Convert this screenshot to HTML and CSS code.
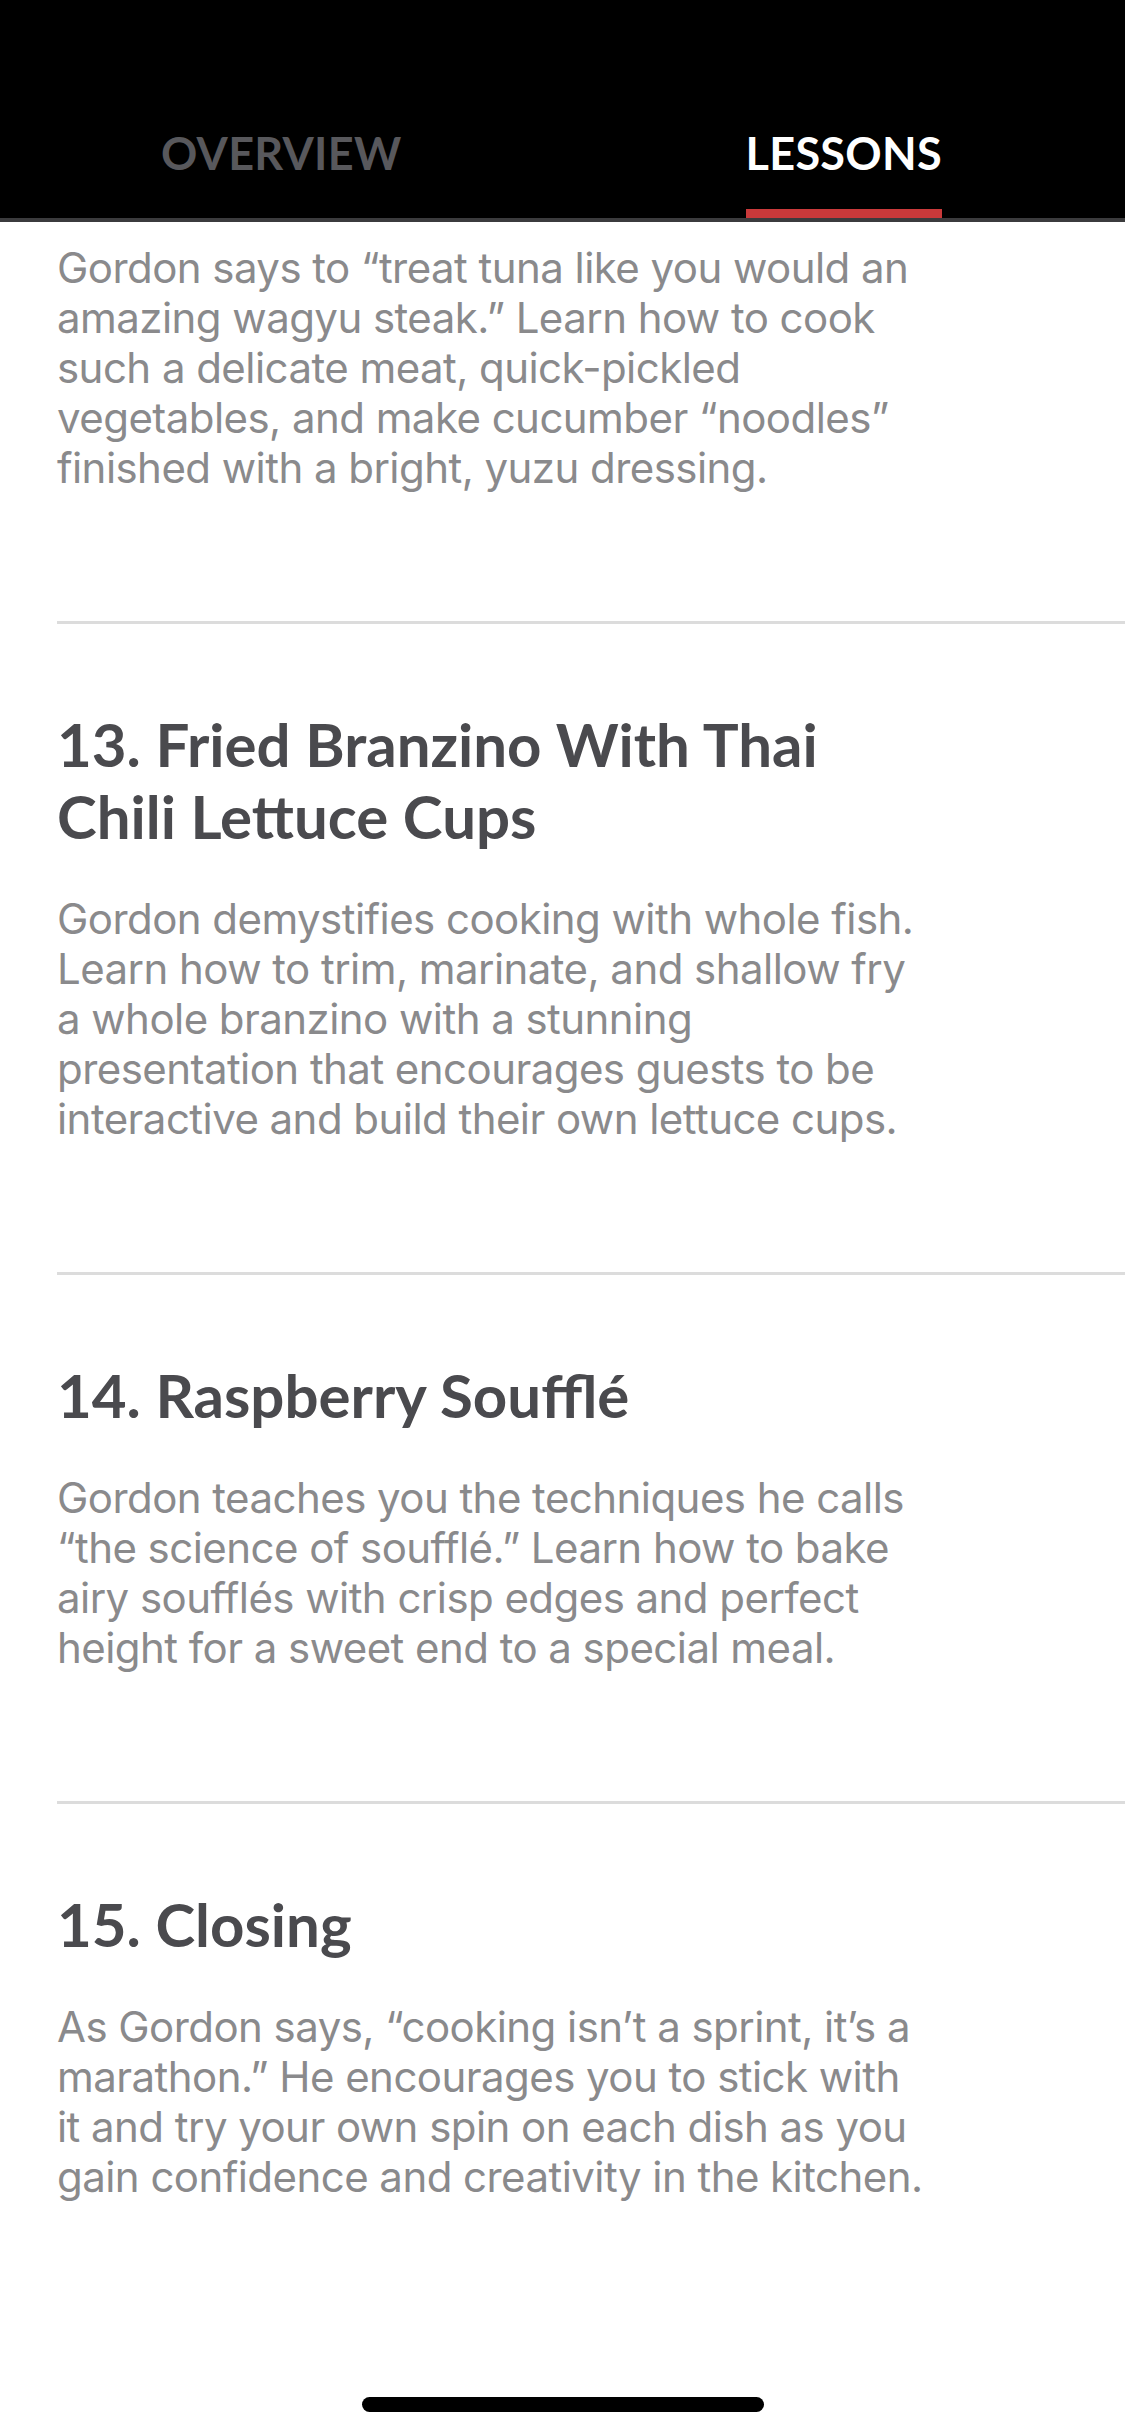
FILE: index.html
```html
<!DOCTYPE html>
<html lang="en">
<head>
<meta charset="utf-8">
<title>Lessons</title>
<link rel="stylesheet" href="styles.css">
</head>
<body>
<div class="screen">
  <header class="header">
    <nav class="tabs">
      <div class="tab">
        <div class="tab-inner">
          <span class="tab-label">OVERVIEW</span>
        </div>
      </div>
      <div class="tab tab-active">
        <div class="tab-inner">
          <span class="tab-label">LESSONS</span>
          <span class="tab-bar"></span>
        </div>
      </div>
    </nav>
  </header>

  <main class="list">
    <section class="lesson lesson-partial">
      <p class="lesson-text">Gordon says to “treat tuna like you would an amazing wagyu steak.” Learn how to cook such a delicate meat, quick-pickled vegetables, and make cucumber “noodles” finished with a bright, yuzu dressing.</p>
    </section>
    <section class="lesson">
      <h2 class="lesson-title">13. Fried Branzino With Thai Chili Lettuce Cups</h2>
      <p class="lesson-text">Gordon demystifies cooking with whole fish. Learn how to trim, marinate, and shallow fry a whole branzino with a stunning presentation that encourages guests to be interactive and build their own lettuce cups.</p>
    </section>
    <section class="lesson">
      <h2 class="lesson-title">14. Raspberry Soufflé</h2>
      <p class="lesson-text">Gordon teaches you the techniques he calls “the science of soufflé.” Learn how to bake airy soufflés with crisp edges and perfect height for a sweet end to a special meal.</p>
    </section>
    <section class="lesson lesson-last">
      <h2 class="lesson-title">15. Closing</h2>
      <p class="lesson-text">As Gordon says, “cooking isn’t a sprint, it’s a marathon.” He encourages you to stick with it and try your own spin on each dish as you gain confidence and creativity in the kitchen.</p>
    </section>
  </main>

  <div class="home-indicator"></div>
</div>
</body>
</html>
```

FILE: styles.css
```css
* { box-sizing: border-box; }

html, body {
  margin: 0;
  padding: 0;
  background: #ffffff;
}

.screen {
  position: relative;
  width: 1125px;
  height: 2436px;
  overflow: hidden;
  background: #ffffff;
}

.header {
  background: #000000;
  padding-top: 126px;
  border-bottom: 4px solid #3b3b3d;
}

.tabs {
  display: grid;
  grid-template-columns: 1fr 1fr;
}

.tab {
  display: flex;
  justify-content: center;
}

.tab-inner {
  display: inline-flex;
  flex-direction: column;
  align-items: stretch;
  padding-bottom: 38px;
}

.tab-active .tab-inner {
  padding-bottom: 0;
}

.tab-label {
  font-family: Lato, "Liberation Sans", sans-serif;
  font-weight: 700;
  font-size: 45px;
  line-height: 54px;
  letter-spacing: 0.3px;
  color: #58585c;
  text-align: center;
}

.tab-active .tab-label {
  color: #ffffff;
}

.tab-bar {
  display: block;
  height: 9px;
  margin-top: 29px;
  margin-bottom: -4px;
  background: #c9393a;
  position: relative;
}

.list {
  padding-top: 21px;
}

.lesson {
  margin-left: 57px;
  padding: 84px 193px 128px 0;
  border-bottom: 3px solid #dcdcdc;
}

.lesson-partial {
  padding-top: 0;
}

.lesson-last {
  border-bottom: none;
}

.lesson-title {
  margin: 0 0 42px 0;
  font-family: Lato, "Liberation Sans", sans-serif;
  font-weight: 700;
  font-size: 60px;
  line-height: 72px;
  color: #4a4a4e;
}

.lesson-text {
  margin: 0;
  font-family: Inter, "Noto Sans", sans-serif;
  font-weight: 400;
  font-size: 42px;
  line-height: 50px;
  letter-spacing: -0.55px;
  color: #8a8a8c;
}

.home-indicator {
  position: absolute;
  left: 362px;
  top: 2397px;
  width: 402px;
  height: 15px;
  border-radius: 8px;
  background: #000000;
}
```
